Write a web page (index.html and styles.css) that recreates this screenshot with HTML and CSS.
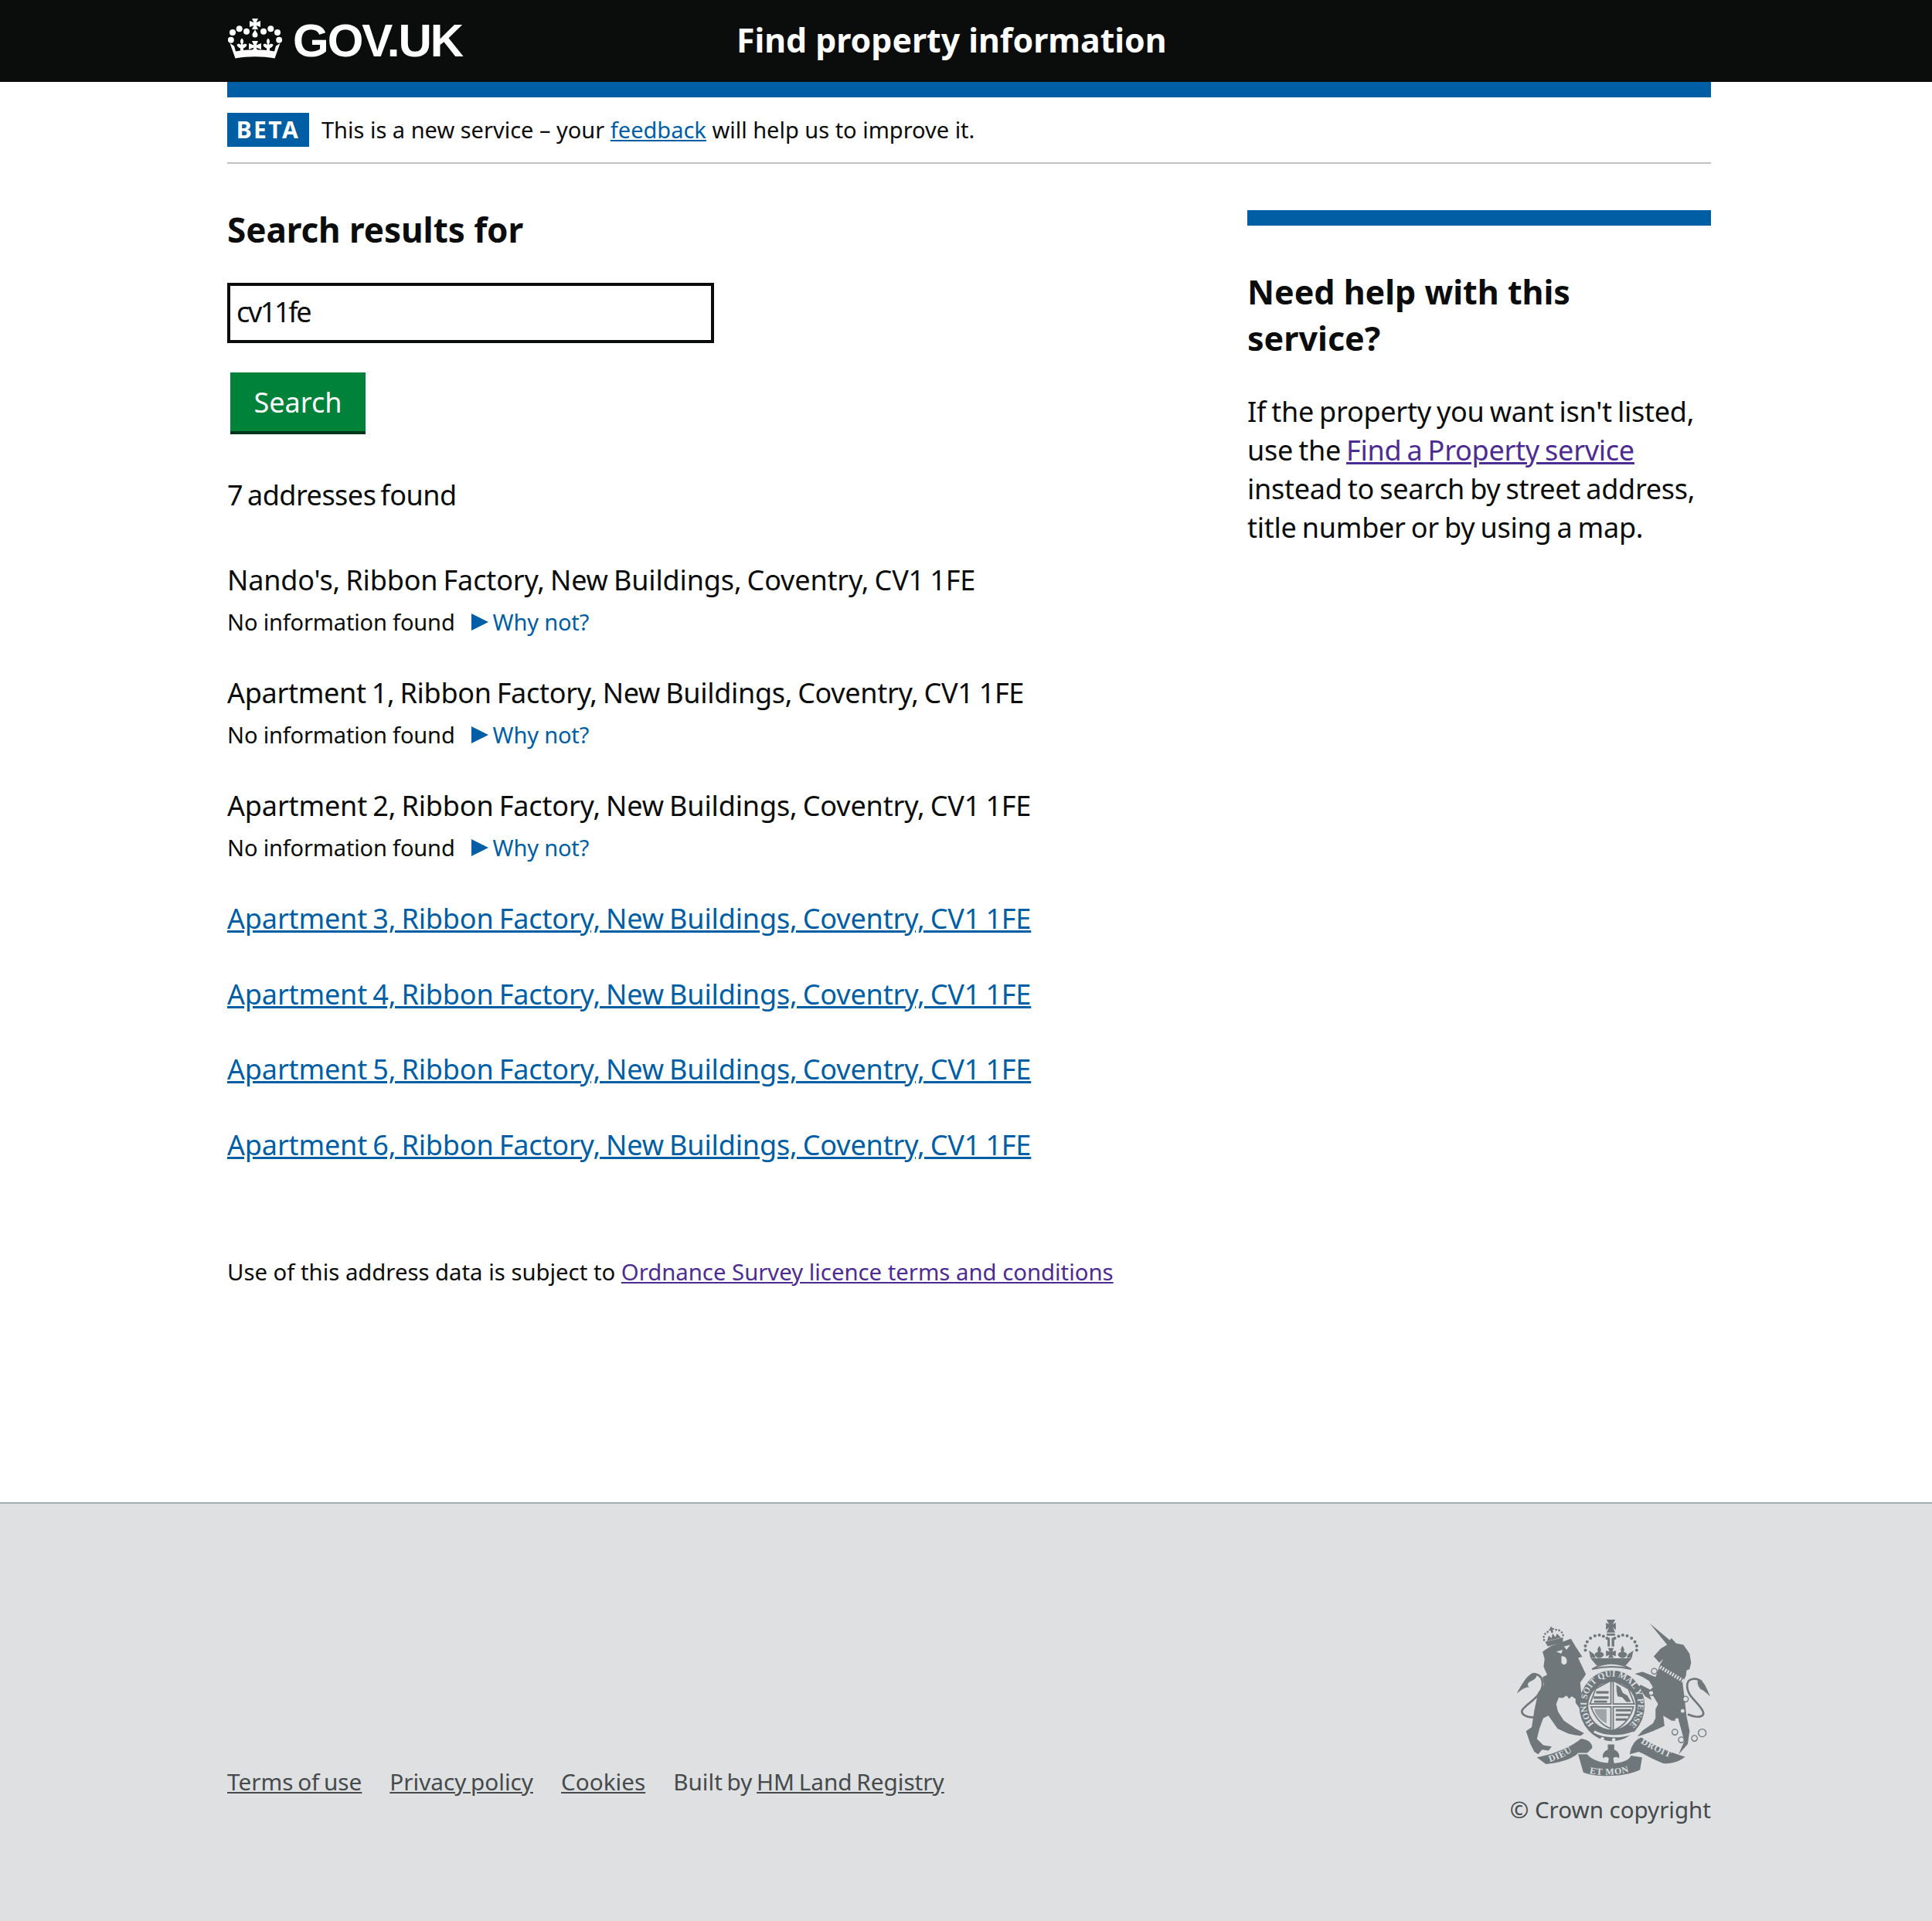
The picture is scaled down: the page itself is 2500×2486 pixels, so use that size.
FILE: index.html
```html
<!DOCTYPE html>
<html lang="en">
<head>
<meta charset="utf-8">
<title>Find property information</title>
<link rel="stylesheet" href="styles.css">
</head>
<body>
<header class="masthead">
  <div class="wrap masthead-in">
    <a class="logo" href="#">
      <svg class="crown" viewBox="0 0 70 52" aria-hidden="true"><g fill="#fff">
        <circle cx="6" cy="18" r="4"/><circle cx="64" cy="18" r="4"/>
        <circle cx="14.700" cy="13.300" r="4"/><circle cx="55.300" cy="13.300" r="4"/>
        <circle cx="24" cy="16.700" r="4"/><circle cx="46" cy="16.700" r="4"/>
        <circle cx="3.800" cy="27.700" r="4"/><circle cx="66.200" cy="27.700" r="4"/>
        <path d="M31 0H39L36.600 5 42 3V11L36.600 9 39 14H31L33.400 9 28 11V3L33.400 5Z"/>
        <path d="M35 14C36 17 38.500 18.500 38.500 21A3.500 3.500 0 0 1 31.500 21C31.500 18.500 34 17 35 14Z"/>
        <path d="M2.500 32L8 35.500 10 42.500C26 39.500 44 39.500 60 42.500L62 35.500 67.500 32 60.500 51.500C44 48.500 26 48.500 9.500 51.500Z"/>
        <path d="M18 25.500C20.500 28 20.500 30 19 33L19.500 34C21 32 23.500 32.500 24.500 34 24 36 22 38 20 38.500L20 43 16 43 16 38.500C14 38 12 36 11.500 34 12.500 32.500 15 32 16.500 34L17 33C15.500 30 15.500 28 18 25.500Z"/>
        <path d="M52 25.500C54.500 28 54.500 30 53 33L53.500 34C55 32 57.500 32.500 58.500 34 58 36 56 38 54 38.500L54 43 50 43 50 38.500C48 38 46 36 45.500 34 46.500 32.500 49 32 50.500 34L51 33C49.500 30 49.500 28 52 25.500Z"/>
        <path d="M31 29H39L36.500 34.500 43 32V40L36.500 37.500 39 43H31L33.500 37.500 27 40V32L33.500 34.500Z"/>
      </g></svg>
      <span class="logo-text">GOV.UK</span>
    </a>
    <a class="service" href="#">Find property information</a>
  </div>
</header>
<div class="wrap">
  <div class="blue-bar"></div>
  <div class="phase">
    <strong class="tag">BETA</strong>
    <span class="phase-text">This is a new service – your <a class="link" href="#">feedback</a> will help us to improve it.</span>
  </div>
  <main class="columns">
    <div class="main-col">
      <h1 class="h-m">Search results for</h1>
      <input class="search" type="text" value="cv11fe">
      <button class="btn" type="button">Search</button>
      <p class="count">7 addresses found</p>
      <ul class="results">
        <li class="result">
          <div class="addr">Nando's, Ribbon Factory, New Buildings, Coventry, CV1 1FE</div>
          <div class="none"><span>No information found</span><a class="why" href="#"><span class="tri"></span>Why not?</a></div>
        </li>
        <li class="result">
          <div class="addr addr-tight">Apartment 1, Ribbon Factory, New Buildings, Coventry, CV1 1FE</div>
          <div class="none"><span>No information found</span><a class="why" href="#"><span class="tri"></span>Why not?</a></div>
        </li>
        <li class="result">
          <div class="addr">Apartment 2, Ribbon Factory, New Buildings, Coventry, CV1 1FE</div>
          <div class="none"><span>No information found</span><a class="why" href="#"><span class="tri"></span>Why not?</a></div>
        </li>
        <li class="result-link"><a class="link" href="#">Apartment 3, Ribbon Factory, New Buildings, Coventry, CV1 1FE</a></li>
        <li class="result-link"><a class="link" href="#">Apartment 4, Ribbon Factory, New Buildings, Coventry, CV1 1FE</a></li>
        <li class="result-link"><a class="link" href="#">Apartment 5, Ribbon Factory, New Buildings, Coventry, CV1 1FE</a></li>
        <li class="result-link"><a class="link" href="#">Apartment 6, Ribbon Factory, New Buildings, Coventry, CV1 1FE</a></li>
      </ul>
      <p class="licence">Use of this address data is subject to <a class="visited" href="#">Ordnance Survey licence terms and conditions</a></p>
    </div>
    <aside class="side-col">
      <h2 class="side-h">Need help with this service?</h2>
      <p class="side-p">If the property you want isn't listed, use the <a class="visited" href="#">Find a Property service</a> instead to search by street address, title number or by using a map.</p>
    </aside>
  </main>
</div>
<footer class="footer">
  <div class="wrap footer-in">
    <ul class="foot-links">
      <li><a href="#">Terms of use</a></li>
      <li><a href="#">Privacy policy</a></li>
      <li><a href="#">Cookies</a></li>
      <li>Built by <a href="#">HM Land Registry</a></li>
    </ul>
    <div class="copyright">
      <svg class="crest" viewBox="70 45 755 620" aria-hidden="true">
        <defs>
          <path id="garter" d="M372 452A100 107 0 1 1 512 452"/>
          <path id="s-dieu" d="M200 600C240 588 285 565 322 535"/>
          <path id="s-mon" d="M348 642C390 654 480 654 525 630"/>
          <path id="s-droit" d="M552 526C590 550 635 570 672 586"/>
        </defs>
        <g class="ink">
          <path d="M172 172L205 150 282 122 300 152 326 192 310 196 340 260 318 292 322 332 350 395 330 408 318 395 300 370 300 355 285 345 275 355 265 342 250 352 235 350 225 375 232 405 255 440 300 470 333 488 320 498 295 495 272 490 230 470 195 420 175 430 160 470 150 510 175 535 208 540 195 556 170 552 155 570 140 560 125 530 108 480 130 465 140 400 155 330 178 300 172 270 190 262 176 230 180 200Z"/>
          <path d="M145 255C120 255 105 275 72 335 95 315 105 310 120 310 110 300 115 290 130 285 140 280 150 272 150 262Z"/>
          <g transform="rotate(-14 213 115)">
            <path d="M178 126H250L244 145H184Z"/><path d="M186 125L198 106 206 118 214 102 222 118 230 106 242 125Z"/>
            <path d="M210 76h8v6h6v6h-6v10h-8v-10h-6v-6h6z"/>
            <circle cx="176" cy="118" r="4"/><circle cx="178" cy="106" r="4"/><circle cx="186" cy="96" r="4"/><circle cx="197" cy="91" r="4"/><circle cx="231" cy="91" r="4"/><circle cx="242" cy="96" r="4"/><circle cx="250" cy="106" r="4"/><circle cx="252" cy="118" r="4"/>
          </g>
          <path d="M588 63L665 127 672 120 690 140 718 145 742 180 748 215 742 240 730 245 728 265 715 293 722 350 730 420 742 480 735 530 700 570 710 545 722 520 700 440 672 440 640 420 645 460 600 480 560 495 540 500 560 478 600 450 610 430 610 395 620 375 602 345 585 335 595 360 570 345 545 310 552 300 590 320 600 310 585 285 560 270 530 258 560 250 590 262 610 270 628 222 640 200 625 215 603 190 630 160 655 145Z"/>
          <path d="M775 280C800 285 805 310 822 345 805 330 795 320 785 318 775 305 770 295 775 280Z"/>
          <path d="M420 48H454L444 66 456 60V88L444 78 454 98H420L430 78 418 88V60L430 66Z"/>
          <path d="M421 102H453V110H421ZM424 118H434V152H424ZM440 118H450V152H440Z"/>
          <path d="M358 198H518L494 226Q437 212 382 226Z"/>
          <path d="M352 168L372 182 378 196H358ZM524 168L504 182 498 196H518Z"/>
          <path d="M392 150C400 160 400 168 396 174 402 172 408 176 410 184 406 192 400 194 397 196H387C384 194 378 192 374 184 376 176 382 172 388 174 384 168 384 160 392 150Z"/>
          <path d="M482 150C490 160 490 168 486 174 492 172 498 176 500 184 496 192 490 194 487 196H477C474 194 468 192 464 184 466 176 472 172 478 174 474 168 474 160 482 150Z"/>
          <path d="M426 158H448L442 172 456 168V190L442 184 448 196H426L432 184 418 190V168L432 172Z"/>
          <ellipse cx="441" cy="382" rx="127" ry="137"/>
          <path d="M150 582C210 570 280 545 320 510 345 510 365 525 365 545L345 565 310 565C290 590 225 605 185 608Z"/>
          <path d="M310 570H345C380 615 500 615 515 575L558 582 550 630C490 660 380 660 330 640Z"/>
          <path d="M510 570C515 535 535 510 555 505 600 535 660 560 725 580 700 600 670 608 640 605 600 590 570 570 545 560Z"/>
          <path d="M425 532H450V552C462 556 474 570 468 585 460 580 452 578 446 586L450 608H425L429 586C423 578 415 580 407 585 401 570 413 556 425 552Z"/>
        </g>
        <path class="tail" d="M146 425C110 432 82 412 95 396 112 372 166 348 172 302 175 268 150 252 128 262"/>
        <path class="tail" d="M735 415C775 432 805 425 793 402 775 365 728 345 733 298 736 275 770 270 790 290"/>
        <path class="lens" d="M364 240Q438 196 516 240Q440 222 364 240Z"/>
        <g class="paper">
          <circle cx="441" cy="382" r="92"/>
          <path d="M225 172L250 165 245 180ZM280 145L255 152 265 165Z"/>
          <path d="M245 190C258 188 268 198 266 212 264 224 250 226 245 214Z"/>
          <circle cx="605" cy="248" r="9"/><circle cx="593" cy="332" r="8"/><circle cx="726" cy="356" r="8"/><circle cx="715" cy="402" r="7"/><circle cx="693" cy="437" r="7"/>
          <rect x="433" y="118" width="4" height="34"/>
        </g>
        <g class="chain">
          <circle cx="605" cy="248" r="11"/><circle cx="593" cy="332" r="10"/><circle cx="726" cy="356" r="11"/>
          <circle cx="685" cy="484" r="11"/><circle cx="710" cy="514" r="11"/><circle cx="761" cy="508" r="11"/><circle cx="791" cy="487" r="15"/>
          <path d="M628 232L722 288" class="collar"/>
        </g>
        <g class="crown-dots">
          <circle cx="338" cy="166" r="6"/><circle cx="338" cy="150" r="6"/><circle cx="345" cy="134" r="6"/><circle cx="358" cy="120" r="6"/><circle cx="375" cy="111" r="6"/><circle cx="392" cy="108" r="6"/><circle cx="408" cy="112" r="6"/><circle cx="422" cy="120" r="6"/>
          <circle cx="537" cy="166" r="6"/><circle cx="537" cy="150" r="6"/><circle cx="530" cy="134" r="6"/><circle cx="517" cy="120" r="6"/><circle cx="500" cy="111" r="6"/><circle cx="483" cy="108" r="6"/><circle cx="467" cy="112" r="6"/><circle cx="452" cy="120" r="6"/>
        </g>
        <g class="shield">
          <path d="M437 284L378 316 356 375H437Z"/>
          <path d="M446 284L505 316 528 375H446Z"/>
          <path d="M360 386H437V470C405 460 375 430 360 386Z"/>
          <path d="M446 386H524C515 430 480 465 446 478Z"/>
        </g>
        <g class="beasts">
          <path d="M380 325h48v10h-48zM370 345h58v10h-58zM372 362h50v8h-50zM456 395h60v9h-60zM456 413h55v9h-55zM456 431h42v9h-42z"/>
          <path d="M458 300l15 10 10 22 18 10 14 25h-18l-16-18-18-4-4-20z"/>
          <path d="M372 395h48v55c-20-8-40-28-48-55z" class="harp"/>
        </g>
        <path class="strap" d="M372 482C415 505 475 505 525 486"/>
        <g class="paper"><circle cx="404" cy="510" r="7"/><circle cx="448" cy="514" r="7"/></g>
        <text class="motto" textLength="500" lengthAdjust="spacing"><textPath href="#garter">HONI SOIT QUI MAL Y PENSE</textPath></text>
        <text class="scroll"><textPath href="#s-dieu">DIEU</textPath></text>
        <text class="scroll"><textPath href="#s-mon" startOffset="6">ET MON</textPath></text>
        <text class="scroll"><textPath href="#s-droit">DROIT</textPath></text>
      </svg>
      <span>© Crown copyright</span>
    </div>
  </div>
</footer>
</body>
</html>
```
FILE: styles.css
```css
* { box-sizing: border-box; }
html, body { margin: 0; padding: 0; }
body { font-family: "Noto Sans", "Liberation Sans", sans-serif; color: #0b0c0c; background: #fff; min-height: 2486px; display: flex; flex-direction: column; }
a { color: inherit; }
.wrap { width: 1920px; margin-left: 294px; }
.masthead { background: #0b0c0c; height: 106px; }
.masthead-in { display: flex; align-items: center; height: 100%; }
.logo { display: flex; align-items: center; color: #fff; text-decoration: none; width: 659px; }
.crown { width: 70px; height: 52px; margin-left: 1px; margin-top: -6px; }
.logo-text { font: bold 60px/1 "Liberation Sans", sans-serif; letter-spacing: -2px; margin-left: 14px; }
.service { color: #fff; font-size: 42.800px; font-weight: 700; text-decoration: none; margin-top: -4px; }
.blue-bar { height: 20px; background: #005ea5; }
.phase { display: flex; align-items: center; gap: 16px; height: 86px; border-bottom: 2px solid #bfc1c3; font-size: 29px; }
.phase-text { margin-top: -2px; }
.tag { background: #005ea5; color: #fff; height: 44px; width: 106px; display: flex; align-items: center; justify-content: center; font-size: 30px; letter-spacing: 2.500px; padding-bottom: 2px; }
.link { color: #005ea5; }
.visited { color: #4c2c92; }
.columns { display: flex; }
.main-col { width: 1320px; }
.side-col { width: 600px; margin-top: 60px; border-top: 20px solid #005ea5; padding-top: 56px; }
.h-m { font-size: 44px; font-weight: 700; margin: 55px 0 39px; line-height: 60px; letter-spacing: -.05px; }
.search { display: block; width: 630px; height: 78px; border: 4px solid #0b0c0c; padding: 0 8px 4px; font: 36px "Noto Sans", sans-serif; letter-spacing: -2.400px; color: #0b0c0c; background: #fff; outline: 0; border-radius: 0; }
.btn { display: block; margin: 38px 0 0 4px; width: 175px; height: 80px; background: #00823b; color: #fff; border: 0; border-bottom: 4px solid #003618; font: 36px "Noto Sans", sans-serif; padding: 0; border-radius: 0; }
.count { font-size: 36px; line-height: 50px; margin: 54px 0 0; letter-spacing: -.5px; word-spacing: -3px; }
.results { list-style: none; margin: 60px 0 0; padding: 0; }
.result { margin-bottom: 45px; }
.addr { font-size: 36px; line-height: 50px; word-spacing: -2px; letter-spacing: -.15px; }
.addr-tight { letter-spacing: -.3px; }
.none { font-size: 29px; line-height: 44px; margin-top: 7px; display: flex; gap: 21px; letter-spacing: -.15px; }
.why { color: #005ea5; text-decoration: none; display: flex; align-items: center; }
.tri { width: 0; height: 0; border-left: 22px solid #005ea5; border-top: 11px solid transparent; border-bottom: 11px solid transparent; margin-right: 6px; }
.result-link { font-size: 36px; line-height: 50px; margin-bottom: 47.500px; word-spacing: -2px; letter-spacing: -.15px; }
.licence { font-size: 29.300px; line-height: 44px; margin: 117px 0 0; }
.side-h { font-size: 43px; line-height: 60px; margin: 0 0 40px; }
.side-p { font-size: 36px; line-height: 50px; margin: 0; word-spacing: -2px; letter-spacing: -.25px; }
.footer { background: #dee0e2; border-top: 2px solid #a1acb2; margin-top: auto; height: 542px; color: #454a4c; }
.footer a { color: #454a4c; }
.footer-in { display: flex; justify-content: space-between; height: 100%; }
.foot-links { list-style: none; margin: 0 0 160px; padding: 0; display: flex; gap: 36px; font-size: 29.700px; align-self: flex-end; word-spacing: -2px; }
.copyright { display: flex; flex-direction: column; align-items: flex-end; font-size: 29.500px; line-height: 44px; padding-top: 149px; }
.crest { width: 252px; height: 207px; margin-bottom: 18px; display: block; }
.ink { fill: #6f777b; }
.paper { fill: #dee0e2; }
.tail { fill: none; stroke: #6f777b; stroke-width: 8px; }
.lens { fill: #dee0e2; stroke: #6f777b; stroke-width: 6px; }
.chain { fill: none; stroke: #6f777b; stroke-width: 4px; }
.collar { stroke: #dee0e2; stroke-width: 14px; stroke-dasharray: 6 5; }
.crown-dots { fill: #6f777b; }
.shield { fill: #dee0e2; stroke: #6f777b; stroke-width: 5px; }
.beasts { fill: #6f777b; }
.harp { fill: #9ea4a7; }
.strap { fill: none; stroke: #dee0e2; stroke-width: 9px; }
.motto { font: bold 34px "Liberation Serif", serif; fill: #dee0e2; letter-spacing: 1px; }
.scroll { font: bold 36px "Liberation Serif", serif; fill: #dee0e2; letter-spacing: 2px; }
```
